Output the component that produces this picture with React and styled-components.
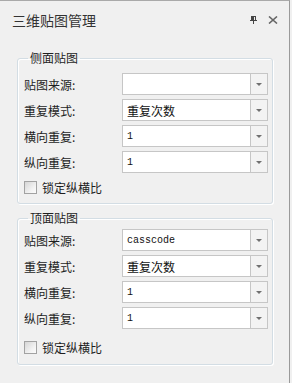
import React from "react";
import styled, { createGlobalStyle } from "styled-components";

const GlobalStyle = createGlobalStyle`
  html, body {
    margin: 0;
    padding: 0;
    background: #f0f0f0;
  }
  body {
    font-family: "Noto Sans CJK SC", "Noto Sans", sans-serif;
    color: #1e1e1e;
  }
`;

const Panel = styled.div`
  width: 289px;
  height: 382px;
  border-top: 1px solid #a9a9a9;
  border-right: 1px solid #9a9a9a;
  background: #f0f0f0;
  display: flex;
  flex-direction: column;
`;

const TitleBar = styled.div`
  height: 38px;
  display: flex;
  align-items: center;
  justify-content: space-between;
  padding: 0 11px 0 12px;
`;

const Title = styled.div`
  font-size: 14px;
  color: #333;
  letter-spacing: 0;
`;

const Actions = styled.div`
  display: flex;
  align-items: center;
  gap: 10px;
`;

const Group = styled.fieldset`
  margin: ${({ $top }) => $top}px 0 0 17px;
  width: 256px;
  box-sizing: border-box;
  border: 1px solid #d3dde4;
  border-radius: 3px;
  box-shadow: 1px 1px 0 #fff, inset 1px 1px 0 #fff;
  padding: ${({ $padTop }) => $padTop}px 4px ${({ $padBottom }) => $padBottom}px 6px;
  min-width: 0;
`;

const Legend = styled.legend`
  font-size: 12px;
  line-height: 18px;
  padding: 0 2px;
  margin-left: 4px;
  color: #1e1e1e;
`;

const Rows = styled.div`
  display: flex;
  flex-direction: column;
  gap: 4px;
`;

const Row = styled.div`
  display: flex;
  align-items: center;
  height: 22px;
`;

const Label = styled.span`
  width: 98px;
  font-size: 12px;
  color: #1e1e1e;
`;

const Combo = styled.div`
  flex: 1;
  height: 22px;
  box-sizing: border-box;
  border: 1px solid #c6c6c6;
  background: #fff;
  display: flex;
`;

const ComboText = styled.span`
  flex: 1;
  padding-left: 4px;
  display: flex;
  align-items: center;
  font-size: ${({ $mono }) => ($mono ? "10px" : "12px")};
  font-family: ${({ $mono }) =>
    $mono ? '"Liberation Mono", monospace' : '"Noto Sans CJK SC", sans-serif'};
  color: #111;
`;

const ComboButton = styled.span`
  width: 16px;
  border-left: 1px solid #c6c6c6;
  background: #f3f3f3;
  display: flex;
  align-items: center;
  justify-content: center;
`;

const Arrow = styled.span`
  width: 0;
  height: 0;
  border-left: 3px solid transparent;
  border-right: 3px solid transparent;
  border-top: 3px solid #707070;
`;

const CheckRow = styled.label`
  display: flex;
  align-items: center;
  gap: 5px;
  height: 13px;
  margin-top: ${({ $gap }) => $gap}px;
  font-size: 12px;
  color: #1e1e1e;
`;

const CheckBox = styled.span`
  width: 11px;
  height: 11px;
  border: 1px solid #a2a2a2;
  background: linear-gradient(135deg, #d5d5d5 0%, #f4f4f4 70%, #fbfbfb 100%);
`;

const PinIcon = () => (
  <svg width="8" height="8" viewBox="0 0 8 8">
    <rect x="1.5" y="0.5" width="4" height="4" fill="none" stroke="#444" />
    <rect x="2" y="1" width="2" height="3" fill="#444" />
    <rect x="0" y="4" width="7" height="1" fill="#444" />
    <rect x="3" y="5" width="1" height="3" fill="#444" />
  </svg>
);

const CloseIcon = () => (
  <svg width="10" height="8" viewBox="0 0 10 8">
    <path d="M1 0.5 L9 7.5 M9 0.5 L1 7.5" stroke="#666" strokeWidth="1.6" />
  </svg>
);

const makeRows = (source) => [
  { label: "贴图来源:", value: source, mono: true },
  { label: "重复模式:", value: "重复次数" },
  { label: "横向重复:", value: "1", mono: true },
  { label: "纵向重复:", value: "1", mono: true },
];

const groups = [
  { title: "侧面贴图", source: "", top: 10, padTop: 6, padBottom: 9, checkGap: 8 },
  { title: "顶面贴图", source: "casscode", top: 5, padTop: 2, padBottom: 10, checkGap: 12 },
];

const ComboBox = ({ value, mono }) => (
  <Combo>
    <ComboText $mono={mono}>{value}</ComboText>
    <ComboButton>
      <Arrow />
    </ComboButton>
  </Combo>
);

export default function App() {
  return (
    <>
      <GlobalStyle />
      <Panel>
        <TitleBar>
          <Title>三维贴图管理</Title>
          <Actions>
            <PinIcon />
            <CloseIcon />
          </Actions>
        </TitleBar>
        {groups.map((g) => (
          <Group key={g.title} $top={g.top} $padTop={g.padTop} $padBottom={g.padBottom}>
            <Legend>{g.title}</Legend>
            <Rows>
              {makeRows(g.source).map((r) => (
                <Row key={r.label}>
                  <Label>{r.label}</Label>
                  <ComboBox value={r.value} mono={r.mono} />
                </Row>
              ))}
            </Rows>
            <CheckRow $gap={g.checkGap}>
              <CheckBox />
              锁定纵横比
            </CheckRow>
          </Group>
        ))}
      </Panel>
    </>
  );
}
